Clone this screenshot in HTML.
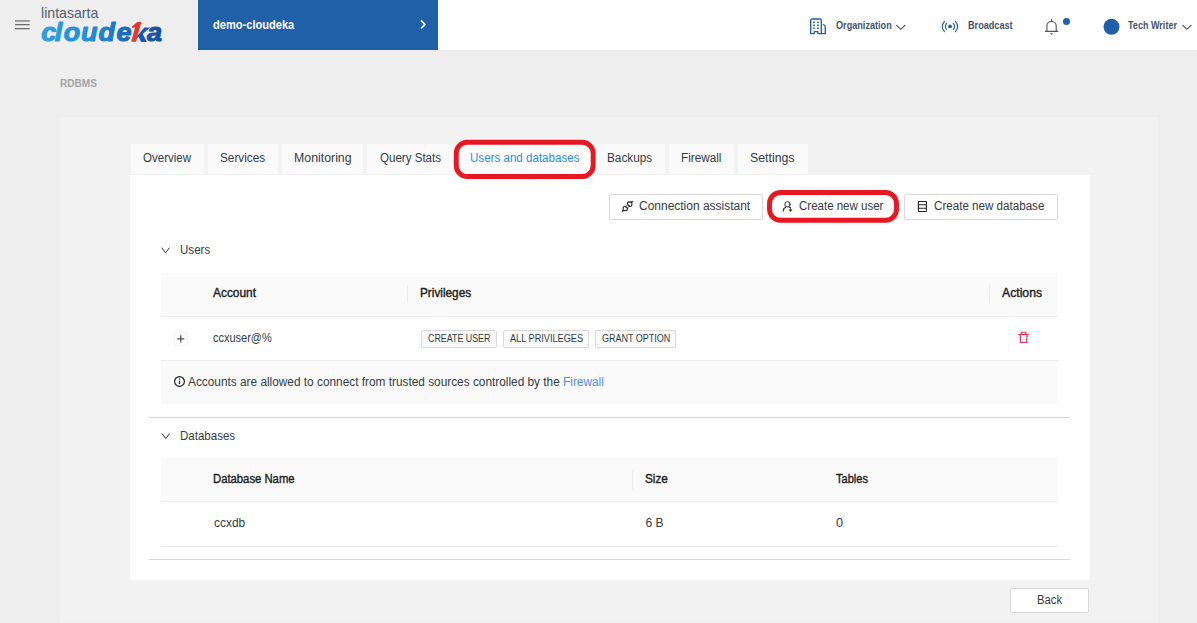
<!DOCTYPE html>
<html>
<head>
<meta charset="utf-8">
<title>RDBMS</title>
<style>
*{box-sizing:border-box;margin:0;padding:0}
html,body{width:1197px;height:623px;overflow:hidden;background:#eeeeee;font-family:"Liberation Sans",sans-serif;color:#262626}
.abs{position:absolute}
svg{position:absolute;overflow:visible}
.t{position:absolute;white-space:nowrap;line-height:1;transform-origin:0 50%}
#hdr-white{left:438px;top:0;width:759px;height:50px;background:#fff}
#hdr-blue{left:198px;top:0;width:240px;height:50px;background:#2060a9}
#inner{left:60px;top:117px;width:1099px;height:505px;background:#f2f2f2}
.tab{position:absolute;top:144px;height:30px;background:#fafafa}
#card{left:130px;top:175px;width:960px;height:405px;background:#fff}
.btn{position:absolute;top:194px;height:26px;background:#fff;border:1px solid #d9d9d9;border-radius:2px}
.red{position:absolute;border:4.6px solid #e3141f;background:transparent}
.th{background:#fafafa;position:absolute}
.hl{position:absolute;height:1px;background:#ececec}
.vl{position:absolute;width:1px;background:#ececec}
.tag{position:absolute;top:330px;height:18px;border:1px solid #d9d9d9;border-radius:2px;background:#fafafa}
</style>
</head>
<body>
<!-- header -->
<div class="abs" id="hdr-white"></div>
<div class="abs" id="hdr-blue"></div>

<!-- hamburger -->
<svg style="left:0;top:0" width="40" height="50"><rect x="15" y="20.200" width="14.700" height="1.500" fill="#848484"/><rect x="15" y="24.050" width="14.700" height="1.250" fill="#686868"/><rect x="15" y="28.050" width="14.700" height="1.250" fill="#686868"/></svg>

<!-- logo: cloudeka -->
<svg id="logo" style="left:0;top:0" width="198" height="50">
<defs><linearGradient id="lg" x1="42" y1="0" x2="162" y2="0" gradientUnits="userSpaceOnUse"><stop offset="0" stop-color="#2a9ee0"/><stop offset="0.3" stop-color="#2292da"/><stop offset="0.52" stop-color="#1d7ccb"/><stop offset="0.72" stop-color="#1a60b5"/><stop offset="1" stop-color="#17479a"/></linearGradient></defs>
<g font-family="Liberation Sans" font-size="25.6" font-weight="bold" font-style="italic" fill="url(#lg)" stroke="url(#lg)" stroke-width="1.1" stroke-linejoin="round" transform="scale(1.055 1)">
<text x="39.05" y="41.2">c</text><text x="51.94" y="41.2">l</text><text x="60.47" y="41.2">o</text><text x="76.78" y="41.2">u</text><text x="93.46" y="41.2">d</text><text x="110.52" y="41.2">e</text><text x="139.34" y="41.2">a</text>
</g>
<path d="M136.500 36.900L144.300 27.400L150 27.400L142.800 34.100L146.900 41.900L141 41.900L138.700 36.700L136.200 38.900Z" fill="#1a56a9"/>
<path d="M141.300 22L137.300 22L131.900 26.500L132 28L135.100 27.300L131.200 41.800L136 41.800Z" fill="#e8352e"/>
</svg>

<!-- project chevron -->
<svg style="left:0;top:0" width="440" height="50"><polyline points="421,20.4 425,24.4 421,28.4" fill="none" stroke="#fff" stroke-width="1.6"/></svg>

<!-- nav icons -->
<svg id="ic-org" style="left:0;top:0" width="1197" height="50">
<g fill="none" stroke="#2060a9" stroke-width="1.350" stroke-linejoin="round" stroke-linecap="round">
<path d="M810.700 33.550V20.250a1.300 1.300 0 0 1 1.300-1.300h8a1.300 1.300 0 0 1 1.300 1.300V33.550"/>
<path d="M810.700 33.550H814.300V31.600H817.900V33.550H825.300"/>
<path d="M823.500 24.600Q825.300 25.100 825.300 27.200V33.550"/>
</g>
<g fill="#2060a9"><rect x="813" y="21.700" width="2" height="1.200"/><rect x="817" y="21.700" width="2" height="1.200"/><rect x="813" y="24.650" width="2" height="1.200"/><rect x="817" y="24.650" width="2" height="1.200"/><rect x="813" y="27.600" width="2" height="1.200"/><rect x="817" y="27.600" width="2" height="1.200"/></g>
<!-- chevrons -->
<polyline points="896.300,25 900.800,29.300 905.300,25" fill="none" stroke="#555" stroke-width="1.100"/>
<polyline points="1182.400,25 1186.900,29.300 1191.400,25" fill="none" stroke="#555" stroke-width="1.100"/>
<!-- broadcast -->
<g fill="none" stroke="#2060a9" stroke-width="1.150" stroke-linecap="round">
<path d="M944.500 21.300Q940.100 26.500 944.500 31.700"/>
<path d="M946.550 23.300Q944.250 26.400 946.550 29.500"/>
<path d="M955.400 21.300Q959.800 26.500 955.400 31.700"/>
<path d="M953.400 23.300Q955.700 26.400 953.400 29.500"/>
</g>
<circle cx="950" cy="26.450" r="1.900" fill="#2060a9"/>
<!-- bell -->
<g fill="none" stroke="#555" stroke-width="1.100" stroke-linecap="round">
<path d="M1045.400 31.450h12.300" stroke-width="1.250"/>
<path d="M1046.900 31.200v-5.200a4.650 4.650 0 0 1 9.300 0v5.200" stroke-width="1.150"/>
<path d="M1051.550 19.400v1.700"/>
</g>
<path d="M1050.100 33.100h2.900l-1.450 1.800z" fill="#777"/>
<circle cx="1066.450" cy="21.400" r="3.500" fill="#2060a9"/>
<circle cx="1111.500" cy="26.800" r="8" fill="#2060a9"/>
</svg>

<div class="abs" id="inner"></div>

<!-- tabs -->
<div class="tab" style="left:131px;width:73px"></div>
<div class="tab" style="left:208px;width:70px"></div>
<div class="tab" style="left:282px;width:81px"></div>
<div class="tab" style="left:367px;width:86px"></div>
<div class="tab" style="left:457px;width:135px;background:#fff;height:31px"></div>
<div class="tab" style="left:596px;width:69px"></div>
<div class="tab" style="left:669px;width:65px"></div>
<div class="tab" style="left:738px;width:70px"></div>

<div class="abs" id="card"></div>

<!-- buttons -->
<div class="btn" style="left:609px;width:154px"></div>
<div class="btn" style="left:769px;width:129px"></div>
<div class="btn" style="left:904px;width:154px"></div>



<!-- Users section -->
<div class="th" style="left:161px;top:273px;width:897px;height:43px"></div>
<div class="hl" style="left:161px;top:316px;width:897px"></div>
<div class="vl" style="left:407px;top:285px;height:18px"></div>
<div class="vl" style="left:989px;top:285px;height:18px"></div>
<div class="hl" style="left:161px;top:360px;width:897px"></div>
<div class="tag" style="left:421px;width:76px"></div>
<div class="tag" style="left:503px;width:86px"></div>
<div class="tag" style="left:595px;width:81px"></div>
<div class="th" style="left:161px;top:361px;width:897px;height:43px"></div>
<div class="hl" style="left:149px;top:417px;width:921px;background:#d6d6d6"></div>

<!-- Databases section -->
<div class="th" style="left:161px;top:458px;width:897px;height:43px"></div>
<div class="hl" style="left:161px;top:501px;width:897px"></div>
<div class="vl" style="left:632px;top:471px;height:18px"></div>
<div class="hl" style="left:161px;top:546px;width:897px"></div>
<div class="hl" style="left:149px;top:559px;width:921px;background:#d6d6d6"></div>

<!-- back -->
<div class="abs" style="left:1010px;top:588px;width:79px;height:25px;background:#fff;border:1px solid #d9d9d9;border-radius:2px"></div>

<div class="abs" style="left:174px;top:332px;width:14px;height:14px;border:1px solid #f4f4f4;border-radius:2px"></div>
<!-- button icons -->
<svg style="left:0;top:0" width="1197" height="623">
<g fill="none" stroke="#222" stroke-width="1.100" stroke-linejoin="round" stroke-linecap="round">
<!-- api/plug -->
<path d="M627.900 202.100L631.900 201.900L631.750 205.400Q631.200 206.400 630 206.550L627.300 204.050Q627.200 202.800 627.900 202.100Z"/>
<path d="M624.800 206.200L627.700 208.700Q627.600 209.900 626.700 210.400L623.100 210.700L623.200 207.300Q623.800 206.300 624.800 206.200Z"/>
<path d="M631.900 201.900l0.600-0.600M623.100 210.700l-0.600 0.600" stroke-width="1.100"/>
<path d="M627.800 204.600l-2 1.900M629.400 206.100l-2 1.900" stroke-width="0.900"/>
<!-- user add -->
<circle cx="787.500" cy="204.300" r="2.700" stroke-width="0.950"/>
<path d="M785.500 207.300Q783.400 208.300 783.300 211"/>
<path d="M789.300 207.200l1.300 0.500"/>
<path d="M790.600 208.900v2.400M789.400 210.100h2.400" stroke-width="1"/>
<!-- database -->
<rect x="918.400" y="201.500" width="8" height="10" rx="0.500"/>
<path d="M918.400 204.700h8M918.400 208.300h8"/>
<!-- section chevrons -->
<polyline points="162,248 165.600,252.800 169.200,248" stroke="#333" stroke-width="1"/>
<polyline points="162.200,433.800 165.800,438.600 169.400,433.800" stroke="#333" stroke-width="1"/>
<!-- plus -->
<path d="M177.200 338.900h7.200M180.800 335.300v7.200" stroke="#222" stroke-width="0.950" stroke-linecap="butt"/>
<!-- info -->
<circle cx="179.500" cy="381.450" r="4.900" stroke="#1a1a1a" stroke-width="1.150"/>
<path d="M179.500 380.700v3.400" stroke="#1a1a1a" stroke-width="1.150" stroke-linecap="butt"/>
</g>
<circle cx="179.500" cy="378.900" r="0.750" fill="#1a1a1a"/>
<!-- trash -->
<g fill="none" stroke="#f02849" stroke-width="1.100" stroke-linejoin="round">
<path d="M1018.300 334.500h10.500"/>
<path d="M1021.300 334.300v-2.100h4.600v2.100"/>
<path d="M1020.200 334.600l0.400 7.900h6l0.400-7.900"/>
</g>
</svg>
<div class="t" style="left:40.73px;top:6.48px;font-size:14.5px;font-weight:normal;color:#506073;transform:scaleX(0.9741);">lintasarta</div>
<div class="t" style="left:213.17px;top:17.64px;font-size:13.3px;font-weight:bold;color:#ffffff;transform:scaleX(0.8330);">demo-cloudeka</div>
<div class="t" style="left:835.60px;top:19.97px;font-size:11.5px;font-weight:bold;color:#455370;transform:scaleX(0.7929);">Organization</div>
<div class="t" style="left:967.61px;top:19.97px;font-size:11.5px;font-weight:bold;color:#455370;transform:scaleX(0.7927);">Broadcast</div>
<div class="t" style="left:1128.20px;top:19.97px;font-size:11.5px;font-weight:bold;color:#455370;transform:scaleX(0.7871);">Tech Writer</div>
<div class="t" style="left:59.61px;top:78.43px;font-size:11.3px;font-weight:bold;color:#a4a4a4;transform:scaleX(0.8900);">RDBMS</div>
<div class="t" style="left:142.84px;top:151.94px;font-size:12px;font-weight:normal;color:#333a45;transform:scaleX(0.9612);">Overview</div>
<div class="t" style="left:219.72px;top:151.94px;font-size:12px;font-weight:normal;color:#333a45;transform:scaleX(0.9822);">Services</div>
<div class="t" style="left:293.67px;top:151.94px;font-size:12px;font-weight:normal;color:#333a45;transform:scaleX(1.0278);">Monitoring</div>
<div class="t" style="left:379.54px;top:151.94px;font-size:12px;font-weight:normal;color:#333a45;transform:scaleX(0.9629);">Query Stats</div>
<div class="t" style="left:469.53px;top:151.94px;font-size:12px;font-weight:normal;color:#1e8bff;transform:scaleX(0.9652);">Users and databases</div>
<div class="t" style="left:607.42px;top:151.94px;font-size:12px;font-weight:normal;color:#333a45;transform:scaleX(0.9822);">Backups</div>
<div class="t" style="left:681.22px;top:151.94px;font-size:12px;font-weight:normal;color:#333a45;transform:scaleX(0.9775);">Firewall</div>
<div class="t" style="left:750.37px;top:151.94px;font-size:12px;font-weight:normal;color:#333a45;transform:scaleX(1.0262);">Settings</div>
<div class="t" style="left:638.80px;top:199.94px;font-size:12px;font-weight:normal;color:#333a45;transform:scaleX(0.9982);">Connection assistant</div>
<div class="t" style="left:799.44px;top:199.94px;font-size:12px;font-weight:normal;color:#333a45;transform:scaleX(0.9586);">Create new user</div>
<div class="t" style="left:933.83px;top:199.94px;font-size:12px;font-weight:normal;color:#333a45;transform:scaleX(0.9673);">Create new database</div>
<div class="t" style="left:180.34px;top:243.74px;font-size:12px;font-weight:normal;color:#333a45;transform:scaleX(0.9633);">Users</div>
<div class="t" style="left:213.20px;top:286.84px;font-size:12px;font-weight:normal;color:#1f1f1f;transform:scaleX(0.9909);-webkit-text-stroke:0.4px #1f1f1f;">Account</div>
<div class="t" style="left:420.32px;top:286.84px;font-size:12px;font-weight:normal;color:#1f1f1f;transform:scaleX(0.9824);-webkit-text-stroke:0.4px #1f1f1f;">Privileges</div>
<div class="t" style="left:1002.30px;top:286.84px;font-size:12px;font-weight:normal;color:#1f1f1f;transform:scaleX(1.0179);-webkit-text-stroke:0.4px #1f1f1f;">Actions</div>
<div class="t" style="left:213.10px;top:331.84px;font-size:12px;font-weight:normal;color:#333a45;transform:scaleX(0.9156);">ccxuser@%</div>
<div class="t" style="left:427.60px;top:333.54px;font-size:10px;font-weight:normal;color:#333a45;transform:scaleX(0.8871);">CREATE USER</div>
<div class="t" style="left:509.80px;top:333.54px;font-size:10px;font-weight:normal;color:#333a45;transform:scaleX(0.9165);">ALL PRIVILEGES</div>
<div class="t" style="left:602.00px;top:333.54px;font-size:10px;font-weight:normal;color:#333a45;transform:scaleX(0.8987);">GRANT OPTION</div>
<div class="t" style="left:188.30px;top:375.84px;font-size:12px;font-weight:normal;color:#333a45;transform:scaleX(0.9865);">Accounts are allowed to connect from trusted sources controlled by the <span style="color:#4b8ff5">Firewall</span></div>
<div class="t" style="left:180.44px;top:429.64px;font-size:12px;font-weight:normal;color:#333a45;transform:scaleX(0.9607);">Databases</div>
<div class="t" style="left:213.06px;top:473.04px;font-size:12px;font-weight:normal;color:#1f1f1f;transform:scaleX(0.9407);-webkit-text-stroke:0.4px #1f1f1f;">Database Name</div>
<div class="t" style="left:644.92px;top:473.04px;font-size:12px;font-weight:normal;color:#1f1f1f;transform:scaleX(0.9773);-webkit-text-stroke:0.4px #1f1f1f;">Size</div>
<div class="t" style="left:835.90px;top:473.04px;font-size:12px;font-weight:normal;color:#1f1f1f;transform:scaleX(0.9200);-webkit-text-stroke:0.4px #1f1f1f;">Tables</div>
<div class="t" style="left:214.00px;top:516.74px;font-size:12px;font-weight:normal;color:#333a45;transform:scaleX(0.9935);">ccxdb</div>
<div class="t" style="left:645.40px;top:516.84px;font-size:12px;font-weight:normal;color:#333a45;transform:scaleX(1.0000);">6 B</div>
<div class="t" style="left:835.90px;top:516.84px;font-size:12px;font-weight:normal;color:#333a45;transform:scaleX(1.0500);">0</div>
<div class="t" style="left:1036.66px;top:593.94px;font-size:12px;font-weight:normal;color:#333a45;transform:scaleX(0.9423);">Back</div>
<!-- red highlights -->
<svg style="left:0;top:0" width="1197" height="623"><g fill="none" stroke="#e81822" stroke-width="4.900">
<rect x="456.250" y="142.250" width="136.900" height="34.200" rx="11" ry="11"/>
<rect x="769.500" y="192.450" width="127" height="27.800" rx="11" ry="11"/>
</g></svg>


</body>
</html>
